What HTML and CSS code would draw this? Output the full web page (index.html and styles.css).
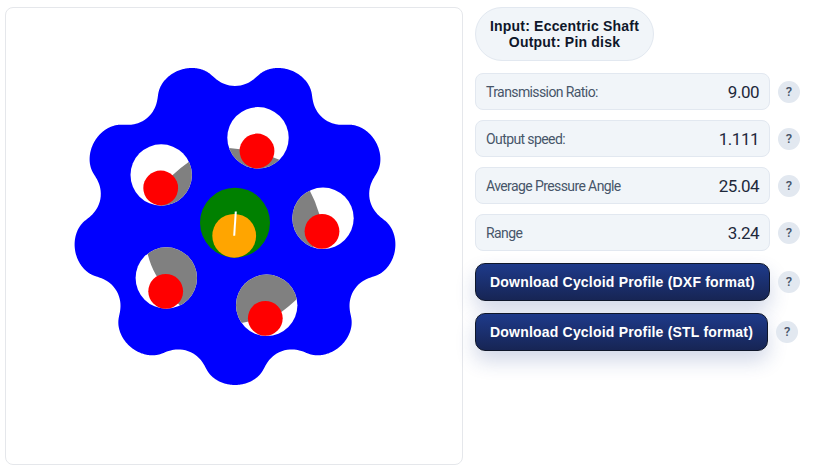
FILE: index.html
```html
<!DOCTYPE html>
<html lang="en">
<head>
    <meta charset="UTF-8">
    <title>Cycloidal Drive</title>
    <link rel="stylesheet" href="styles.css">
</head>
<body>
    <div class="layout">
        <div class="canvas-card">
            <svg class="drive" width="456" height="456" viewBox="6 8 456 456">
                <defs>
                    <clipPath id="hole1"><circle cx="258" cy="137.8" r="30.7"/></clipPath>
                    <clipPath id="hole2"><circle cx="161.2" cy="175" r="30.7"/></clipPath>
                    <clipPath id="hole3"><circle cx="323" cy="218.3" r="30.7"/></clipPath>
                    <clipPath id="hole4"><circle cx="166.3" cy="278" r="30.7"/></clipPath>
                    <clipPath id="hole5"><circle cx="266.7" cy="305.3" r="30.7"/></clipPath>
                </defs>
                <path id="disk" fill="#0000ff"/>
                <circle cx="258" cy="137.8" r="30.7" fill="#fff"/>
                <circle cx="161.2" cy="175" r="30.7" fill="#fff"/>
                <circle cx="323" cy="218.3" r="30.7" fill="#fff"/>
                <circle cx="166.3" cy="278" r="30.7" fill="#fff"/>
                <circle cx="266.7" cy="305.3" r="30.7" fill="#fff"/>
                <path clip-path="url(#hole1)" fill="#808080" d="M257 151 L229 148 L220 148 L220 175 L290 175 L290 164 L280 160 Z"/>
                <path clip-path="url(#hole2)" fill="#808080" d="M160.7 188 L172.7 175 Q180 168 190 161 L200 150 L200 230 L160.7 230 Z"/>
                <path clip-path="url(#hole3)" fill="#808080" d="M322 231 L319.3 214 Q315.5 201 309 189 L280 180 L280 260 L305 262 Z"/>
                <path clip-path="url(#hole4)" fill="#808080" d="M165.7 291 L156 275 Q150 265 147 251 L130 240 L210 235 L210 330 L200 326 Z"/>
                <path clip-path="url(#hole5)" fill="#808080" d="M265.3 318.3 L281.7 311.7 Q289 306.5 298 298 L310 285 L310 260 L225 260 L225 325 L242.7 322.7 Z"/>
                <circle cx="257" cy="151" r="17.4" fill="#ff0000"/>
                <circle cx="160.7" cy="188" r="17.4" fill="#ff0000"/>
                <circle cx="322" cy="231.3" r="17.4" fill="#ff0000"/>
                <circle cx="165.7" cy="291.3" r="17.4" fill="#ff0000"/>
                <circle cx="265.3" cy="318.3" r="17.4" fill="#ff0000"/>
                <circle cx="235" cy="222.7" r="35" fill="#008000"/>
                <circle cx="234.2" cy="235.8" r="21.9" fill="#ffa500"/>
                <line x1="234.2" y1="235.8" x2="235.8" y2="211.5" stroke="#fff" stroke-width="2"/>
            </svg>
        </div>
        <div class="panel">
            <div class="mode">Input: Eccentric Shaft<br>Output: Pin disk</div>
            <div class="row">
                <div class="field"><span class="label">Transmission Ratio:</span><span class="value">9.00</span></div>
                <span class="help">?</span>
            </div>
            <div class="row">
                <div class="field"><span class="label">Output speed:</span><span class="value">1.111</span></div>
                <span class="help">?</span>
            </div>
            <div class="row">
                <div class="field"><span class="label">Average Pressure Angle</span><span class="value">25.04</span></div>
                <span class="help">?</span>
            </div>
            <div class="row">
                <div class="field"><span class="label">Range</span><span class="value">3.24</span></div>
                <span class="help">?</span>
            </div>
            <div class="row row-btn">
                <button class="download" type="button">Download Cycloid Profile (DXF format)</button>
                <span class="help">?</span>
            </div>
            <div class="row row-btn">
                <button class="download" type="button">Download Cycloid Profile (STL format)</button>
                <span class="help">?</span>
            </div>
        </div>
    </div>
    <script src="script.js"></script>
</body>
</html>
```

FILE: styles.css
```css
* {
    box-sizing: border-box;
}
body {
    margin: 0;
    background: #fff;
    font-family: Roboto, sans-serif;
}
.layout {
    display: flex;
    align-items: flex-start;
    gap: 12px;
    padding: 7px 0 0 5px;
}
.canvas-card {
    width: 458px;
    height: 458px;
    border: 1px solid #e5e7eb;
    border-radius: 8px;
    background: #fff;
}
.drive {
    display: block;
}
.panel {
    display: flex;
    flex-direction: column;
    align-items: flex-start;
}
.mode {
    width: 179px;
    height: 54px;
    margin-bottom: 12px;
    padding-top: 10px;
    border: 1px solid #e2e8f0;
    border-radius: 27px;
    background: #f1f5f9;
    color: #0f172a;
    font-family: "Liberation Sans", sans-serif;
    font-size: 14px;
    font-weight: 700;
    line-height: 16px;
    letter-spacing: 0.2px;
    text-align: center;
}
.row {
    display: flex;
    align-items: center;
    gap: 8px;
    margin-bottom: 10px;
}
.field {
    display: flex;
    justify-content: space-between;
    align-items: center;
    width: 295px;
    height: 37px;
    padding: 0 10px;
    border: 1px solid #e2e8f0;
    border-radius: 8px;
    background: #f1f5f9;
}
.label {
    color: #475569;
    font-size: 14px;
    letter-spacing: -0.6px;
}
.value {
    color: #1e293b;
    font-size: 17px;
    letter-spacing: -0.5px;
}
.help {
    width: 22px;
    height: 22px;
    border-radius: 50%;
    background: #e2e8f0;
    color: #475569;
    font-size: 13px;
    font-weight: 500;
    line-height: 22px;
    text-align: center;
}
.row-btn {
    margin-top: 2px;
}
.download {
    height: 38px;
    padding: 0 14px;
    border: 1px solid #0f172a;
    border-radius: 10px;
    background: linear-gradient(#1e3a8a, #172554);
    box-shadow: 0 10px 20px rgba(30, 58, 138, 0.2);
    color: #fff;
    font-family: "Liberation Sans", sans-serif;
    font-size: 14px;
    font-weight: 700;
    letter-spacing: 0.2px;
}
```

FILE: script.js
```js
// cycloid disk outline: pin circle R, pin radius Rr, eccentricity E, N pins
var R = 176, Rr = 26.5, E = 12.8, N = 10;
var cx = 235, cy = 222.7;
var turn = -Math.PI / 2;

var d = '';
for (var i = 0; i <= 1440; i++) {
    var t = i / 1440 * 2 * Math.PI;
    var a = (1 - N) * t;
    var phi = Math.atan2(Math.sin(a), R / (E * N) - Math.cos(a));
    var x = R * Math.cos(t) - Rr * Math.cos(t + phi) - E * Math.cos(N * t);
    var y = -R * Math.sin(t) + Rr * Math.sin(t + phi) + E * Math.sin(N * t);
    var px = cx + x * Math.cos(turn) - y * Math.sin(turn);
    var py = cy + x * Math.sin(turn) + y * Math.cos(turn);
    d += (i ? 'L' : 'M') + px.toFixed(2) + ' ' + py.toFixed(2);
}
document.getElementById('disk').setAttribute('d', d + 'Z');
```
